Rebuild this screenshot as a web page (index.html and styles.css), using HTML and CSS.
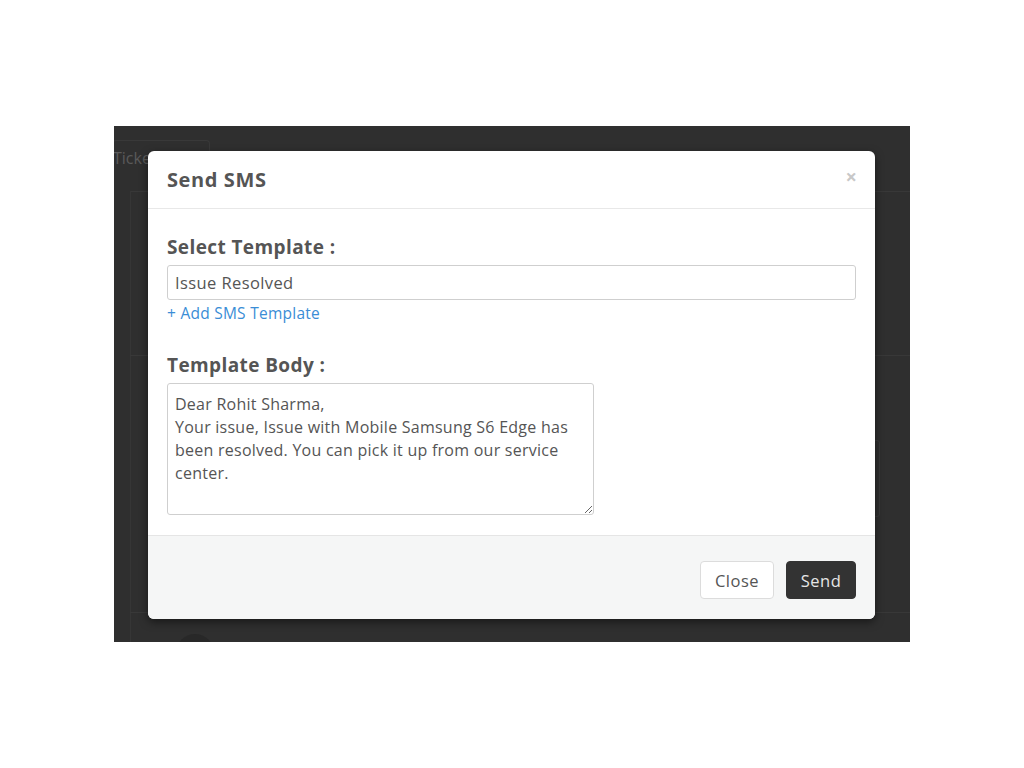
FILE: index.html
```html
<!DOCTYPE html>
<html lang="en">
<head>
    <meta charset="UTF-8">
    <title>Send SMS</title>
    <link rel="stylesheet" href="styles.css">
</head>
<body>
    <div class="shot">
        <!-- faded page behind the modal -->
        <div class="backdrop-page">
            <div class="bg-tab">Ticket</div>
            <div class="bg-rule rule-top"></div>
            <div class="bg-col"></div>
            <div class="bg-rule rule-mid"></div>
            <div class="bg-box"></div>
            <div class="bg-rule rule-low"></div>
            <div class="bg-avatar"></div>
        </div>

        <div class="modal">
            <div class="modal-header">
                <h4 class="modal-title">Send SMS</h4>
                <span class="modal-close">&times;</span>
            </div>
            <div class="modal-body">
                <label class="field-label" for="template">Select Template :</label>
                <input class="field-input" id="template" type="text" value="Issue Resolved">
                <a class="add-link" href="#">+ Add SMS Template</a>

                <label class="field-label body-label" for="body">Template Body :</label>
                <textarea class="field-area" id="body">Dear Rohit Sharma,
Your issue, Issue with Mobile Samsung S6 Edge has been resolved. You can pick it up from our service center.</textarea>
            </div>
            <div class="modal-footer">
                <button class="btn btn-default">Close</button>
                <button class="btn btn-dark">Send</button>
            </div>
        </div>
    </div>
</body>
</html>
```

FILE: styles.css
```css
html, body {
    margin: 0;
    height: 100%;
}
body {
    background: #ffffff;
    font-family: 'Open Sans', 'Liberation Sans', sans-serif;
    display: flex;
    align-items: center;
    justify-content: center;
}
.shot {
    position: relative;
    width: 796px;
    height: 516px;
    background-color: #2f2f2f;
    overflow: hidden;
}

/* background page, dimmed */
.backdrop-page {
    position: absolute;
    inset: 0;
}
.bg-tab {
    position: absolute;
    left: -2px;
    top: 14px;
    width: 96px;
    height: 34px;
    border: 1px solid #393939;
    border-bottom: none;
    border-radius: 4px 4px 0 0;
    color: #5a5a5a;
    font-size: 16px;
    line-height: 34px;
}
.bg-rule {
    position: absolute;
    left: 16px;
    right: 0;
    height: 1px;
    background: #383838;
}
.rule-top { top: 65px; }
.rule-mid { top: 229px; }
.rule-low { top: 486px; }
.bg-col {
    position: absolute;
    left: 16px;
    top: 65px;
    bottom: 0;
    width: 1px;
    background: #363636;
}
.bg-box {
    position: absolute;
    left: 740px;
    top: 314px;
    width: 24px;
    height: 75px;
    border: 1px solid #3a3a3a;
    border-radius: 3px;
}
.bg-avatar {
    position: absolute;
    left: 62px;
    top: 508px;
    width: 38px;
    height: 38px;
    border-radius: 50%;
    background: #282828;
}

/* modal */
.modal {
    position: absolute;
    left: 34px;
    top: 25px;
    width: 727px;
    background: #fff;
    border-radius: 6px;
    box-shadow: 0 3px 9px rgba(0, 0, 0, 0.5);
    color: #555;
    overflow: hidden;
}
.modal-header {
    height: 57px;
    border-bottom: 1px solid #e8e8e8;
    display: flex;
    align-items: center;
    justify-content: space-between;
    padding: 0 19px;
}
.modal-title {
    margin: 0;
    font-size: 20px;
    font-weight: 700;
    letter-spacing: 0.6px;
    color: #555;
}
.modal-close {
    color: #c8c8c8;
    font-size: 20px;
    font-weight: 700;
    margin-top: -6px;
    margin-right: -1px;
}
.modal-body {
    padding: 26px 19px 20px;
    display: flex;
    flex-direction: column;
    align-items: flex-start;
}
.field-label {
    font-size: 19px;
    font-weight: 700;
    letter-spacing: 0.4px;
    line-height: 24px;
    color: #555;
    margin-bottom: 6px;
}
.body-label {
    margin-top: 30px;
}
.field-input {
    box-sizing: border-box;
    width: 100%;
    height: 35px;
    border: 1px solid #cfcfcf;
    border-radius: 3px;
    padding: 0 7px;
    font-family: inherit;
    font-size: 16.5px;
    letter-spacing: 0.4px;
    color: #555;
}
.add-link {
    margin-top: 3px;
    font-size: 15.5px;
    letter-spacing: 0.25px;
    line-height: 20px;
    color: #3a8dd6;
    text-decoration: none;
}
.field-area {
    box-sizing: border-box;
    width: 427px;
    height: 132px;
    border: 1px solid #cfcfcf;
    border-radius: 3px;
    padding: 9px 7px;
    font-family: inherit;
    font-size: 16px;
    letter-spacing: 0.25px;
    line-height: 23px;
    color: #555;
    resize: both;
}
.modal-footer {
    border-top: 1px solid #e5e5e5;
    background: #f5f6f6;
    display: flex;
    justify-content: flex-end;
    align-items: flex-start;
    gap: 12px;
    padding: 25px 19px 0;
    box-sizing: border-box;
    height: 84px;
}
.btn {
    height: 38px;
    border-radius: 4px;
    font-family: inherit;
    font-size: 16.5px;
    letter-spacing: 0.5px;
    padding: 0 10px;
    cursor: pointer;
}
.btn-default {
    width: 74px;
    background: #fff;
    border: 1px solid #dcdcdc;
    color: #555;
}
.btn-dark {
    width: 70px;
    background: #333;
    border: 1px solid #333;
    color: #e6e6e6;
}
```
